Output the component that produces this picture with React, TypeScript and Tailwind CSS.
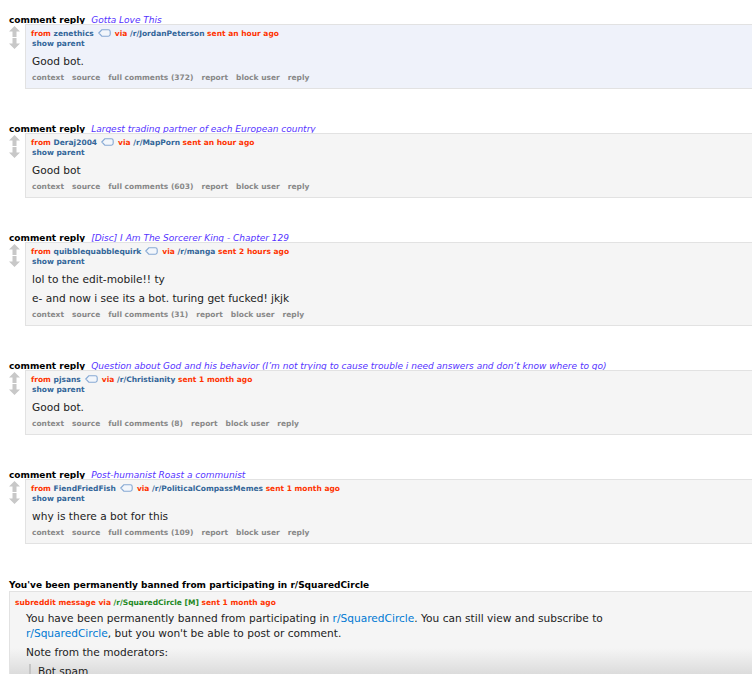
import React from "react";

type Reply = {
  subject: string;
  author: string;
  sub: string;
  sent: string;
  body: string[];
  comments: number;
  unread?: boolean;
};

const replies: Reply[] = [
  {
    subject: "Gotta Love This",
    author: "zenethics",
    sub: "JordanPeterson",
    sent: "an hour ago",
    body: ["Good bot."],
    comments: 372,
    unread: true,
  },
  {
    subject: "Largest trading partner of each European country",
    author: "Deraj2004",
    sub: "MapPorn",
    sent: "an hour ago",
    body: ["Good bot"],
    comments: 603,
  },
  {
    subject: "[Disc] I Am The Sorcerer King - Chapter 129",
    author: "quibblequabblequirk",
    sub: "manga",
    sent: "2 hours ago",
    body: [
      "lol to the edit-mobile!! ty",
      "e- and now i see its a bot. turing get fucked! jkjk",
    ],
    comments: 31,
  },
  {
    subject:
      "Question about God and his behavior (I’m not trying to cause trouble i need answers and don’t know where to go)",
    author: "pjsans",
    sub: "Christianity",
    sent: "1 month ago",
    body: ["Good bot."],
    comments: 8,
  },
  {
    subject: "Post-humanist Roast a communist",
    author: "FiendFriedFish",
    sub: "PoliticalCompassMemes",
    sent: "1 month ago",
    body: ["why is there a bot for this"],
    comments: 109,
  },
];

const Arrows = () => (
  <div className="w-[16px] shrink-0 flex flex-col pt-[2px] gap-[1px]">
    <svg width="11" height="11" viewBox="0 0 11 11">
      <path d="M5.5 0 L11 5.5 H7.5 V11 H3.5 V5.5 H0 Z" fill="#c8c8c8" />
    </svg>
    <svg width="11" height="11" viewBox="0 0 11 11">
      <path d="M5.5 11 L11 5.5 H7.5 V0 H3.5 V5.5 H0 Z" fill="#c8c8c8" />
    </svg>
  </div>
);

const Tag = () => (
  <svg width="13" height="8" viewBox="0 0 13 8" className="inline-block mx-[4px] align-[-1px]">
    <path
      d="M0.8 4 L3.8 0.8 H10.3 Q12.2 0.8 12.2 2.7 V5.3 Q12.2 7.2 10.3 7.2 H3.8 Z"
      fill="#f2f6fb"
      stroke="#86a9d4"
      strokeWidth="1.1"
    />
  </svg>
);

const ReplyBlock = ({ r }: { r: Reply }) => (
  <div className="mb-[32px]">
    <div className="h-[12px] leading-[12px] whitespace-nowrap">
      <span className="text-[9px] font-bold text-black">comment reply</span>
      <span className="ml-[6px] text-[9px] italic text-[#5533ff]">{r.subject}</span>
    </div>
    <div className="flex">
      <Arrows />
      <div
        className={`flex-1 border-y border-l border-[#e2e2e2] pt-[4px] pb-[5px] pl-[5px] ${
          r.unread ? "bg-[#eff2fa]" : "bg-[#f5f5f5]"
        }`}
      >
        <div className="h-[10px] leading-[10px] text-[7.5px] font-bold whitespace-nowrap">
          <span className="text-[#ff3300]">from </span>
          <span className="text-[#336699]">{r.author}</span>
          <Tag />
          <span className="text-[#ff3300]">via </span>
          <span className="text-[#336699]">/r/{r.sub}</span>
          <span className="text-[#ff3300]"> sent {r.sent}</span>
        </div>
        <div className="h-[10px] leading-[10px] text-[7.5px] font-bold text-[#336699] pl-[1px]">
          show parent
        </div>
        <div className="pt-[5px] pl-[1px] flex flex-col gap-[5px]">
          {r.body.map((p, i) => (
            <p key={i} className="text-[10.6px] leading-[14px] text-[#222]">
              {p}
            </p>
          ))}
        </div>
        <div className="mt-[5px] h-[10px] leading-[10px] text-[7.5px] font-bold text-[#888] flex gap-[8px] pl-[1px]">
          <span>context</span>
          <span>source</span>
          <span>full comments ({r.comments})</span>
          <span>report</span>
          <span>block user</span>
          <span>reply</span>
        </div>
      </div>
    </div>
  </div>
);

export default function App() {
  return (
    <div className="h-[674px] overflow-hidden bg-white pt-[12px] pl-[9px] font-['DejaVu_Sans',Verdana,sans-serif]">
      {replies.map((r, i) => (
        <ReplyBlock key={i} r={r} />
      ))}

      <div className="pt-[3px]">
        <div className="h-[12px] leading-[12px] text-[9px] font-bold text-black whitespace-nowrap">
          You've been permanently banned from participating in r/SquaredCircle
        </div>
        <div className="border-y border-l border-[#e2e2e2] bg-[linear-gradient(to_bottom,#f5f5f5_0px,#f5f5f5_56px,#d8d8d8_86px)] pt-[5px] pl-[5px] pb-[10px]">
          <div className="h-[11px] leading-[11px] text-[7.5px] font-bold whitespace-nowrap">
            <span className="text-[#ff3300]">subreddit message via </span>
            <span className="text-[#228822]">/r/SquaredCircle</span>
            <span className="text-[#228822]"> [M]</span>
            <span className="text-[#ff3300]"> sent 1 month ago</span>
          </div>
          <div className="pl-[11px] pt-[3px] max-w-[600px] text-[10.6px] leading-[15px] text-[#222] flex flex-col gap-[4px]">
            <p>
              You have been permanently banned from participating in{" "}
              <span className="text-[#0079d3]">r/SquaredCircle</span>. You can still view and subscribe to{" "}
              <span className="text-[#0079d3]">r/SquaredCircle</span>, but you won't be able to post or comment.
            </p>
            <p>Note from the moderators:</p>
            <div className="ml-[3px] border-l-2 border-[#c5c5c5] pl-[7px]">
              <p>Bot spam</p>
            </div>
          </div>
        </div>
      </div>
    </div>
  );
}
